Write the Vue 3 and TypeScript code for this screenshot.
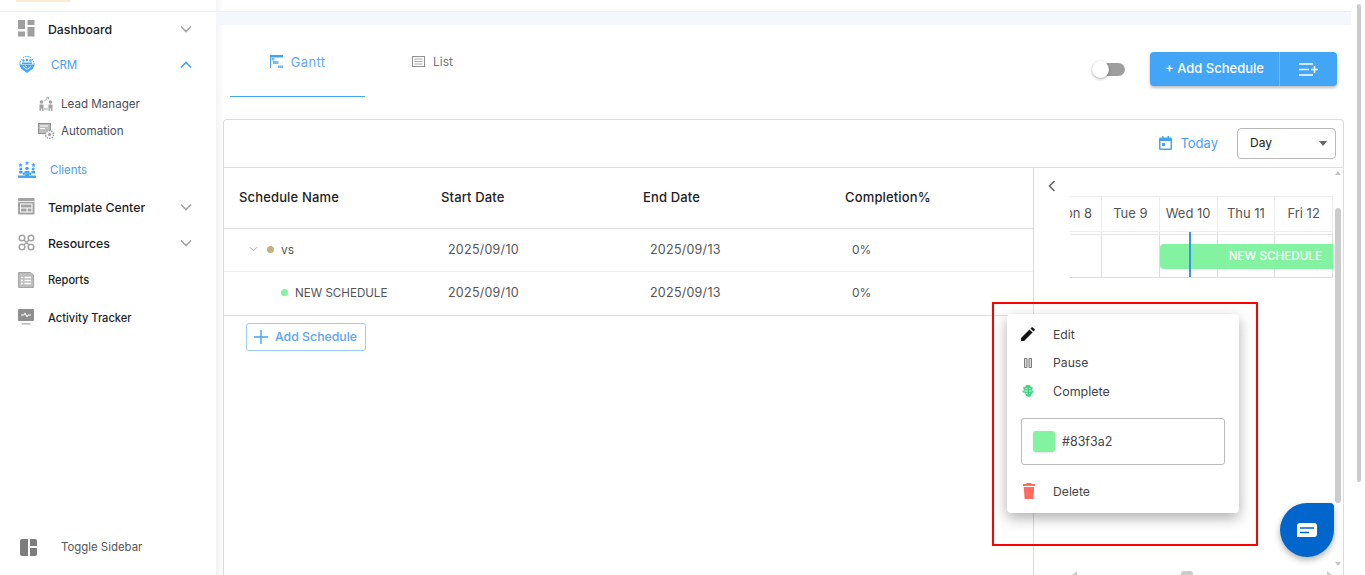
<script setup lang="ts">
interface NavItem { label: string; icon: string; kind: string; chevron?: string }
const topNav: NavItem[] = [
  { label: 'Dashboard', icon: 'dash', kind: 'plain', chevron: 'down' },
  { label: 'CRM', icon: 'crm', kind: 'active', chevron: 'up' },
]
const subNav = [
  { label: 'Lead Manager', icon: 'lead' },
  { label: 'Automation', icon: 'auto' },
]
const lowNav: NavItem[] = [
  { label: 'Clients', icon: 'clients', kind: 'active clients' },
  { label: 'Template Center', icon: 'tmpl', kind: 'plain', chevron: 'down' },
  { label: 'Resources', icon: 'res', kind: 'plain', chevron: 'down' },
  { label: 'Reports', icon: 'rep', kind: 'plain reports' },
  { label: 'Activity Tracker', icon: 'act', kind: 'plain activity' },
]
const rows = [
  { cls: 'parent', dot: '#c2b27e', name: 'vs', start: '2025/09/10', end: '2025/09/13', pct: '0%' },
  { cls: 'child', dot: '#83f3a2', name: 'NEW SCHEDULE', start: '2025/09/10', end: '2025/09/13', pct: '0%' },
]
const days = ['Mon 8', 'Tue 9', 'Wed 10', 'Thu 11', 'Fri 12']
</script>

<template>
  <div class="page">
    <aside class="sidebar">
      <div class="logo-sliver"></div>
      <nav class="nav">
        <a v-for="n in topNav" :key="n.label" class="nav-row" :class="n.kind">
          <svg class="ico" viewBox="0 0 18 18">
            <g v-if="n.icon === 'dash'" fill="#9f9f9f">
              <rect x="0" y="0" width="7" height="9" /><rect x="9.500" y="0" width="7" height="5" />
              <rect x="9.500" y="7" width="7" height="9.500" /><rect x="0" y="11.500" width="7" height="5" />
            </g>
            <g v-else fill="#42a5f5">
              <path d="M2.600 11a7.500 7.500 0 0 1 1.400-8M14 3a7.500 7.500 0 0 1 1.400 8M5 1.600a7.500 7.500 0 0 1 8 0" fill="none" stroke="#42a5f5" stroke-width="1" stroke-dasharray="1.500 .7" />
              <circle cx="5.500" cy="4.500" r="1.200" /><circle cx="9" cy="4" r="1.200" /><circle cx="12.500" cy="4.500" r="1.200" />
              <path d="M4 6.500h10v1.500H4z" />
              <path d="M1.500 8.500h15l-1.500 4-6 4.500-6-4.500z" />
              <path d="M5 10.500l4 3 4-3M7 9.500l2 1.500" fill="none" stroke="#fff" stroke-width=".9" />
            </g>
          </svg>
          <span class="lbl">{{ n.label }}</span>
          <svg v-if="n.chevron" class="chev" viewBox="0 0 12 8"><path :d="n.chevron === 'down' ? 'M1 1.500l5 5 5-5' : 'M1 6.500l5-5 5 5'" /></svg>
        </a>
        <div class="sub">
          <a v-for="s in subNav" :key="s.label" class="sub-row" :class="s.icon">
            <svg class="sub-ico" viewBox="0 0 16 16">
              <g v-if="s.icon === 'lead'" fill="#a0a0a0">
                <circle cx="3.500" cy="6" r="1.800" /><path d="M1.500 8.500h4V15h-1.300v-2.500h-1.400V15H1.500z" />
                <circle cx="12.500" cy="6" r="1.800" /><path d="M10.500 8.500h4V15h-1.300v-2.500h-1.400V15h-1.300z" />
                <path d="M6 12.500h4v1H6z" />
                <path d="M6.500 5l3.500-3.500M8.500 1.300h2v2" fill="none" stroke="#a0a0a0" stroke-width=".9" />
              </g>
              <g v-else>
                <rect x="0.500" y="0.500" width="12" height="10" fill="#bdbdbd" stroke="#8f8f8f" />
                <path d="M2 3h8M2 5.500h5" stroke="#fff" stroke-width="1" />
                <circle cx="11.500" cy="11.500" r="4" fill="#fff" stroke="#9a9a9a" stroke-width="1.500" stroke-dasharray="1.500 1" />
                <circle cx="11.500" cy="11.500" r="1.500" fill="#9a9a9a" />
              </g>
            </svg>
            <span>{{ s.label }}</span>
          </a>
        </div>
        <a v-for="n in lowNav" :key="n.label" class="nav-row" :class="n.kind">
          <svg class="ico" viewBox="0 0 18 18">
            <g v-if="n.icon === 'clients'" fill="#42a5f5">
              <path d="M2.500 2l.7 1.300 1.400.2-1 1 .2 1.400-1.300-.6-1.300.6.200-1.400-1-1 1.400-.2zM9 0l.7 1.300 1.400.2-1 1 .2 1.400L9 3.300l-1.300.6.200-1.400-1-1 1.400-.2zM15.500 2l.7 1.300 1.400.2-1 1 .2 1.400-1.300-.6-1.300.6.200-1.400-1-1 1.400-.2z" />
              <circle cx="2.800" cy="8" r="1.500" /><circle cx="9" cy="7.500" r="1.800" /><circle cx="15.200" cy="8" r="1.500" />
              <path d="M1 10h3.600v2.500H1zM6.500 10h5v2.800h-5zM13.400 10H17v2.500h-3.600z" />
              <circle cx="5.800" cy="12.800" r="1.200" /><circle cx="12.200" cy="12.800" r="1.200" />
              <path d="M0 17v-2.500h7V13h4v1.500h7V17z" />
            </g>
            <g v-else-if="n.icon === 'tmpl'">
              <rect x="0" y="0" width="16.500" height="16.500" rx="1" fill="#a3a3a3" />
              <path d="M0 3.500h16.500" stroke="#fff" stroke-width="0.800" />
              <rect x="2.500" y="6" width="11.500" height="8" fill="none" stroke="#fff" stroke-width="1" />
              <path d="M2.500 10h11.500M9 10v4" stroke="#fff" stroke-width="1" />
            </g>
            <g v-else-if="n.icon === 'res'" fill="none" stroke="#a3a3a3" stroke-width="1.500">
              <circle cx="4" cy="4" r="2.800" /><circle cx="13" cy="4" r="2.800" />
              <circle cx="4" cy="13" r="2.800" /><circle cx="13" cy="13" r="2.800" />
              <path d="M6 6l5 5M11 6l-5 5" />
            </g>
            <g v-else-if="n.icon === 'rep'">
              <path d="M.5 1.500h12l3 2.500v12.500H.5z" fill="#bdbdbd" stroke="#a5a5a5" />
              <path d="M3 6.500h2M6.500 6.500h6.500M3 9.500h2M6.500 9.500h6.500M3 12.500h2M6.500 12.500h6.500" stroke="#fff" stroke-width="1.300" />
            </g>
            <g v-else>
              <rect x="0" y="0" width="16" height="12" rx="1" fill="#8f8f8f" />
              <path d="M3 6h3l1-2 2 4 1-2h3" fill="none" stroke="#fff" stroke-width="1" />
              <rect x="3.500" y="14" width="9" height="1.600" fill="#bdbdbd" />
            </g>
          </svg>
          <span class="lbl">{{ n.label }}</span>
          <svg v-if="n.chevron" class="chev" viewBox="0 0 12 8"><path d="M1 1.500l5 5 5-5" /></svg>
        </a>
      </nav>
      <div class="toggle-side">
        <svg class="toggle-ico" viewBox="0 0 17 17" fill="#7d7d7d">
          <path d="M2 0h6v17H2a2 2 0 0 1-2-2V2a2 2 0 0 1 2-2zM10 0h5a2 2 0 0 1 2 2v5h-7zM10 9h7v6a2 2 0 0 1-2 2h-5z" />
        </svg>
        <span>Toggle Sidebar</span>
      </div>
    </aside>

    <main class="main">
      <div class="band"></div>
      <div class="topbar">
        <div class="tab on">
          <svg class="tab-ico" viewBox="0 0 13 13">
            <path d="M0 0h13v2.500H1V13H0z" fill="#42a5f5" />
            <path d="M1.500 3h3v2.500h-3zM3 6h5.500v3H3zM8 10.500h5V13H8z" fill="#7db9f2" />
          </svg>
          <span>Gantt</span>
        </div>
        <div class="tab">
          <svg class="tab-ico" viewBox="0 0 13 11">
            <rect x="0.500" y="0.500" width="12" height="10" fill="none" stroke="#8f8f8f" />
            <path d="M2.500 3h8M2.500 5.500h8M2.500 8h8" stroke="#a8a8a8" />
          </svg>
          <span>List</span>
        </div>
        <div class="actions">
          <span class="switch"><i></i></span>
          <div class="btn-group">
            <button class="btn-main"><span>+ Add Schedule</span></button>
            <button class="btn-side">
              <svg viewBox="0 0 19 13" width="19" height="13" stroke="#fff" stroke-width="1.500" fill="none">
                <path d="M0 1h14M0 6.500h10M0 12h14M12 6.500h7M15.500 3v7" />
              </svg>
            </button>
          </div>
        </div>
      </div>

      <section class="panel">
        <div class="panel-tools">
          <svg class="cal" viewBox="0 0 13 14">
            <path d="M3 0h1.500v1.500h4V0H10v1.500h1.500A1.500 1.500 0 0 1 13 3v9.500a1.500 1.500 0 0 1-1.500 1.500h-10A1.500 1.500 0 0 1 0 12.500V3a1.500 1.500 0 0 1 1.500-1.500H3zM1.500 5v7.500h10V5zM3 7h3v3H3z" fill="#42a5f5" />
          </svg>
          <span class="today">Today</span>
          <div class="select"><span>Day</span><i></i></div>
        </div>
        <div class="panel-body">
          <div class="table">
            <div class="thead">
              <span class="c1">Schedule Name</span>
              <span class="c2">Start Date</span>
              <span class="c3">End Date</span>
              <span class="c4">Completion%</span>
            </div>
            <div v-for="r in rows" :key="r.name" class="trow" :class="r.cls">
              <span class="c1 name">
                <svg v-if="r.cls === 'parent'" class="caret" viewBox="0 0 10 6"><path d="M1 1l4 4 4-4" fill="none" stroke="#9a9a9a" /></svg>
                <i class="dot" :style="{ background: r.dot }"></i><b>{{ r.name }}</b>
              </span>
              <span class="c2 v">{{ r.start }}</span>
              <span class="c3 v">{{ r.end }}</span>
              <span class="c4 v pct">{{ r.pct }}</span>
            </div>
            <button class="add-row">
              <svg viewBox="0 0 14 14" width="14" height="14"><path d="M7 0v14M0 7h14" stroke="#42a5f5" stroke-width="1.400" /></svg>
              <span>Add Schedule</span>
            </button>
          </div>
          <div class="gantt">
            <svg class="back" viewBox="0 0 8 12"><path d="M6.500 1l-5 5 5 5" fill="none" stroke="#666" stroke-width="1.600" /></svg>
            <div class="g-head">
              <span v-for="d in days" :key="d">{{ d }}</span>
            </div>
            <div class="g-row">
              <span v-for="d in days" :key="d"></span>
              <div class="g-bar">NEW SCHEDULE</div>
              <div class="g-now"></div>
            </div>
          </div>
        </div>
      </section>
    </main>

    <div class="page-scroll"></div>
    <div class="in-scroll"></div>
    <div class="in-up"></div>
    <div class="in-down"></div>
    <div class="h-left"></div>
    <div class="h-thumb"></div>
    <div class="h-right"></div>

    <div class="highlight"></div>
    <div class="menu">
      <div class="m-item">
        <svg class="m-ico" viewBox="0 0 14 14"><path d="M0 14v-3L8.500 2.500l3 3L3 14zM9.500 1.500l1-1a1 1 0 0 1 1.400 0l1.600 1.600a1 1 0 0 1 0 1.400l-1 1z" fill="#111" /></svg>
        <span>Edit</span>
      </div>
      <div class="m-item pause">
        <svg class="m-ico" viewBox="0 0 14 14"><path d="M3.500 2.500h2.500v9H3.500zM8 2.500h2.500v9H8z" fill="#ddd" stroke="#777" /></svg>
        <span>Pause</span>
      </div>
      <div class="m-item complete">
        <svg class="m-ico" viewBox="0 0 14 14" fill="#3ddc84">
          <path d="M5 1h4l1 2h2l-1 3 2 2-2 1-1 3-2 1-3-1-1-3-3-1 2-2-1-3h2z" />
          <path d="M4.500 4.500h2M8 4.500h1.500M3.500 7h3M8 7h2.500M5 9.500h1.500M8 9.500h1" stroke="#fff" stroke-width=".8" />
        </svg>
        <span>Complete</span>
      </div>
      <div class="color-box"><i></i><span>#83f3a2</span></div>
      <div class="m-item del">
        <svg class="m-ico trash" viewBox="0 0 12 16"><path d="M4 0h4l1 1h3v2H0V1h3zM.8 4h10.400l-.8 12H1.600z" fill="#ff6b5e" /></svg>
        <span>Delete</span>
      </div>
    </div>
    <div class="chat">
      <svg viewBox="0 0 20 14" width="20" height="14">
        <path d="M3 0h14a3 3 0 0 1 3 3v8a3 3 0 0 1-3 3H0V3a3 3 0 0 1 3-3z" fill="#fff" />
        <path d="M3 5h14M3 9.500h9" stroke="#0066cc" stroke-width="1.400" />
      </svg>
    </div>
  </div>
</template>

<style scoped>
.page {
  position: relative;
  display: flex;
  width: 1365px;
  height: 575px;
  overflow: hidden;
  background: #fff;
  font-family: Inter, "Open Sans", sans-serif;
  color: #333;
}
.sidebar {
  position: relative;
  flex: 0 0 216px;
  display: flex;
  flex-direction: column;
  box-sizing: border-box;
  background: #fff;
  border-top: 1px solid #eee;
  margin-top: 11px;
  z-index: 2;
}
.logo-sliver {
  position: absolute;
  left: 16px;
  top: -12px;
  width: 54px;
  height: 2px;
  background: #fde9d2;
}
.nav { display: flex; flex-direction: column; flex: 1; margin-top: -1px; }
.nav-row {
  display: flex;
  align-items: center;
  height: 36px;
  padding-left: 18px;
  font-size: 12.300px;
  font-weight: 450;
  color: #1d1d1f;
}
.nav-row .ico { width: 18px; height: 18px; flex: none; }
.nav-row .lbl { margin-left: 12px; }
.nav-row.active { color: #4a9df5; font-size: 11.500px; font-weight: 400; }
.nav-row.active .lbl { margin-left: 15px; }
.nav-row.clients .lbl { margin-left: 14px; }
.nav-row.clients { margin-top: 8px; margin-bottom: 1px; }
.nav-row.reports, .nav-row.activity { font-size: 11.100px; }
.nav-row.reports { margin-top: 1px; }
.nav-row.activity { margin-top: 2px; }
.chev {
  width: 12px; height: 8px; margin-left: auto; margin-right: 24px;
  fill: none; stroke: #a5a5a5; stroke-width: 1.700;
}
.active .chev { stroke: #42a5f5; }
.sub { display: flex; flex-direction: column; padding: 7px 0 0 38px; }
.sub-row {
  display: flex; align-items: center; height: 27px;
  font-size: 11.600px; color: #4a4f57;
}
.sub-ico { width: 16px; height: 16px; margin-right: 7px; flex: none; }
.toggle-side {
  display: flex; align-items: center; height: 30px; margin-bottom: 13px;
  padding-left: 20px; font-size: 11.400px; color: #555;
}
.toggle-ico { width: 17px; height: 17px; margin-right: 24px; }

.main {
  flex: 1;
  min-width: 0;
  display: flex;
  flex-direction: column;
  padding-top: 12px;
  background: linear-gradient(90deg, #f3f3f3 0, #fff 8px);
}
.band {
  flex: none; height: 13px; margin-right: 14px;
  background: #f4f8fd;
  box-shadow: 0 -1px 0 #eceff3;
}
.topbar {
  flex: none; display: flex; height: 72px; padding-left: 14px;
  box-sizing: content-box;
  margin-bottom: 22px;
}
.tab {
  width: 135px; height: 72px; box-sizing: border-box; padding-top: 29px;
  display: flex; justify-content: center; align-items: flex-start; gap: 8px;
  font-size: 12px; color: #777;
}
.tab.on { color: #62a8f7; border-bottom: 1px solid #42a5f5; font-size: 13px; letter-spacing: .3px; }
.tab span { line-height: 16px; }
.tab-ico { width: 13px; height: 13px; margin-top: 1px; }
.actions {
  margin-left: auto; margin-right: 28px; display: flex; align-items: center;
  gap: 25px; height: 34px; margin-top: 27px;
}
.switch {
  position: relative; display: block; width: 33px; height: 13px;
  background: transparent;
}
.switch::before {
  content: ""; position: absolute; left: 9px; right: 0; top: 0; bottom: 0;
  background: #9e9e9e; border-radius: 7px;
}
.switch i {
  position: absolute; left: 0; top: -2px; width: 17px; height: 17px;
  border-radius: 50%; background: #fff; box-shadow: 0 1px 3px rgba(0,0,0,.35);
}
.btn-group {
  display: flex; height: 34px; border-radius: 4px; background: #42a5f5;
  box-shadow: 0 2px 3px rgba(0,0,0,.25);
}
.btn-main, .btn-side {
  border: 0; background: transparent; color: #fff; padding: 0;
  font: 500 13px Inter, sans-serif;
}
.btn-main { width: 130px; border-right: 1px solid #7cc1f8; padding-bottom: 2px; }
.btn-side { width: 57px; display: flex; align-items: center; justify-content: center; }

.panel {
  flex: 1; min-height: 0; margin-left: 7px; margin-right: 21px;
  border: 1px solid #dcdcdc; border-bottom: 0; border-radius: 4px 4px 0 0;
  display: flex; flex-direction: column;
}
.panel-tools {
  flex: none; height: 47px; display: flex; align-items: center;
  border-bottom: 1px solid #dedede; padding-right: 7px; justify-content: flex-end;
}
.cal { width: 13px; height: 14px; margin-right: 8px; margin-top: -1px; }
.today { font-size: 13px; color: #4a9df5; margin-right: 19px; padding-bottom: 2px; }
.select {
  width: 99px; height: 31px; box-sizing: border-box; border: 1px solid #b8b8b8;
  border-radius: 4px; display: flex; align-items: center; justify-content: space-between;
  padding: 0 8px 2px 12px; font-size: 12px; color: #222;
}
.select i { border: 4.500px solid transparent; border-top: 5px solid #666; border-bottom: 0; margin-top: 2px; }
.panel-body { flex: 1; min-height: 0; display: flex; }
.table { flex: 0 0 809px; border-right: 1px solid #dcdcdc; }
.thead, .trow { display: flex; align-items: center; }
.thead {
  padding: 0 0 2px 15px; border-bottom: 1px solid #dedede;
  font-size: 13px; letter-spacing: .15px; color: #1d1d1f; box-sizing: border-box; height: 61px; font-weight: 450;
}
.trow {
  height: 43px; box-sizing: border-box; font-size: 12.500px; letter-spacing: .25px; color: #555;
  padding: 0 0 2px 15px; border-bottom: 1px solid #f0f0f0;
}
.trow.child { height: 44px; border-bottom: 1px solid #dcdcdc; }
.name b { font-weight: 400; font-size: 12px; letter-spacing: 0; }
.child .name b { font-size: 11.600px; }
.pct { font-size: 12px; letter-spacing: 0; }
.c1, .c2, .c3 { flex: 0 0 202px; }
.v { padding-left: 7px; box-sizing: border-box; }
.name { display: flex; align-items: center; }
.parent .name { padding-left: 10px; box-sizing: border-box; }
.child .name { padding-left: 42px; box-sizing: border-box; }
.caret { width: 9px; height: 6px; margin-right: 9px; }
.dot { display: block; width: 7px; height: 7px; border-radius: 50%; margin-right: 7px; }
.add-row {
  display: flex; align-items: center; gap: 7px; margin: 7px 0 0 22px; width: 120px; height: 28px;
  border: 1px solid #9ccbf6; border-radius: 3px; background: #fff; color: #5aa5f5;
  padding: 0 0 0 7px; font: 500 12.300px Inter, sans-serif; box-sizing: border-box;
}
.add-row span { padding-bottom: 1px; }
.gantt { position: relative; flex: 1; min-width: 0; padding: 0 10px 0 36px; }
.back { position: absolute; left: 14px; top: 12px; width: 8px; height: 12px; }
.g-head {
  margin-top: 28px; height: 36px; display: flex; justify-content: flex-end; overflow: hidden;
  border-top: 1px solid #eee; box-sizing: border-box;
}
.g-head span {
  flex: 0 0 57.750px; box-sizing: border-box; border-right: 1px solid #eee; border-bottom: 1px solid #eee; padding-bottom: 2px;
  display: flex; align-items: center; justify-content: center; font-size: 13px; color: #555; white-space: nowrap;
}
.g-row {
  position: relative; height: 46px; display: flex; justify-content: flex-end; overflow: hidden;
  border-bottom: 1px solid #dedede; box-sizing: border-box;
}
.g-row::before { content: ""; position: absolute; left: 0; right: 0; top: 2px; height: 1px; background: #e8e8e8; }
.g-row span { flex: 0 0 57.750px; box-sizing: border-box; border-right: 1px solid #dedede; }
.g-bar {
  position: absolute; left: 90px; right: 0; top: 12px; height: 25px; background: #83f3a2; border-radius: 4px 0 0 4px;
  color: #fff; font-size: 11.700px; font-weight: 500; line-height: 25px; text-align: right; padding-right: 11px; box-sizing: border-box;
}
.g-now { position: absolute; left: 119px; top: 0; bottom: 0; width: 2px; background: #3d8ff0; }

.page-scroll { position: absolute; right: 4px; top: 4px; width: 4px; height: 478px; background: #ccc; border-radius: 2px; }
.in-scroll { position: absolute; left: 1335px; top: 208px; width: 6px; height: 295px; background: #ccc; border-radius: 3px; }
.in-up, .in-down { position: absolute; left: 1335px; width: 0; border: 3px solid transparent; }
.in-up { top: 171px; border-bottom: 4px solid #c4c4c4; border-top: 0; }
.in-down { top: 562px; border-top: 4px solid #c4c4c4; border-bottom: 0; }
.h-left, .h-right { position: absolute; top: 571px; width: 0; border: 4px solid transparent; }
.h-left { left: 1072px; border-right: 5px solid #ccc; border-left: 0; }
.h-right { left: 1327px; border-left: 5px solid #ccc; border-right: 0; }
.h-thumb { position: absolute; left: 1181px; top: 571px; width: 12px; height: 6px; background: #ccc; border-radius: 3px; }

.highlight {
  position: absolute; left: 992px; top: 302px; width: 266px; height: 244px;
  border: 2px solid #f00; box-sizing: border-box; z-index: 3;
}
.menu {
  position: absolute; left: 1007px; top: 314px; width: 232px; height: 199px; box-sizing: border-box;
  padding: 6px 14px 0; background: #fff; border-radius: 4px; z-index: 4;
  box-shadow: 0 5px 14px rgba(0,0,0,.32);
  display: flex; flex-direction: column; font-size: 12.200px; color: #444;
}
.m-item { display: flex; align-items: center; height: 28px; }
.pause { height: 29px; }
.complete span { font-size: 12.500px; }
.m-ico { width: 14px; height: 14px; margin-right: 18px; flex: none; }
.del { margin-top: 12px; }
.m-ico.trash { width: 12px; height: 16px; margin-left: 2px; }
.color-box {
  display: flex; align-items: center; height: 47px; margin-top: 13px; box-sizing: border-box;
  border: 1px solid #bbb; border-radius: 3px; padding-left: 11px; font-size: 12.500px; color: #444;
}
.color-box i { display: block; width: 22px; height: 21px; border-radius: 3px; background: #83f3a2; margin-right: 7px; box-shadow: 0 1px 2px rgba(0,0,0,.12); }
.chat {
  position: absolute; left: 1280px; top: 503px; width: 54px; height: 54px; background: #0066cc; z-index: 4;
  border-radius: 50% 4px 50% 50%; box-shadow: 0 3px 6px rgba(0,0,0,.3);
  display: flex; align-items: center; justify-content: center;
}
</style>

<style>
html, body { margin: 0; background: #fff; overflow: hidden; }
</style>
